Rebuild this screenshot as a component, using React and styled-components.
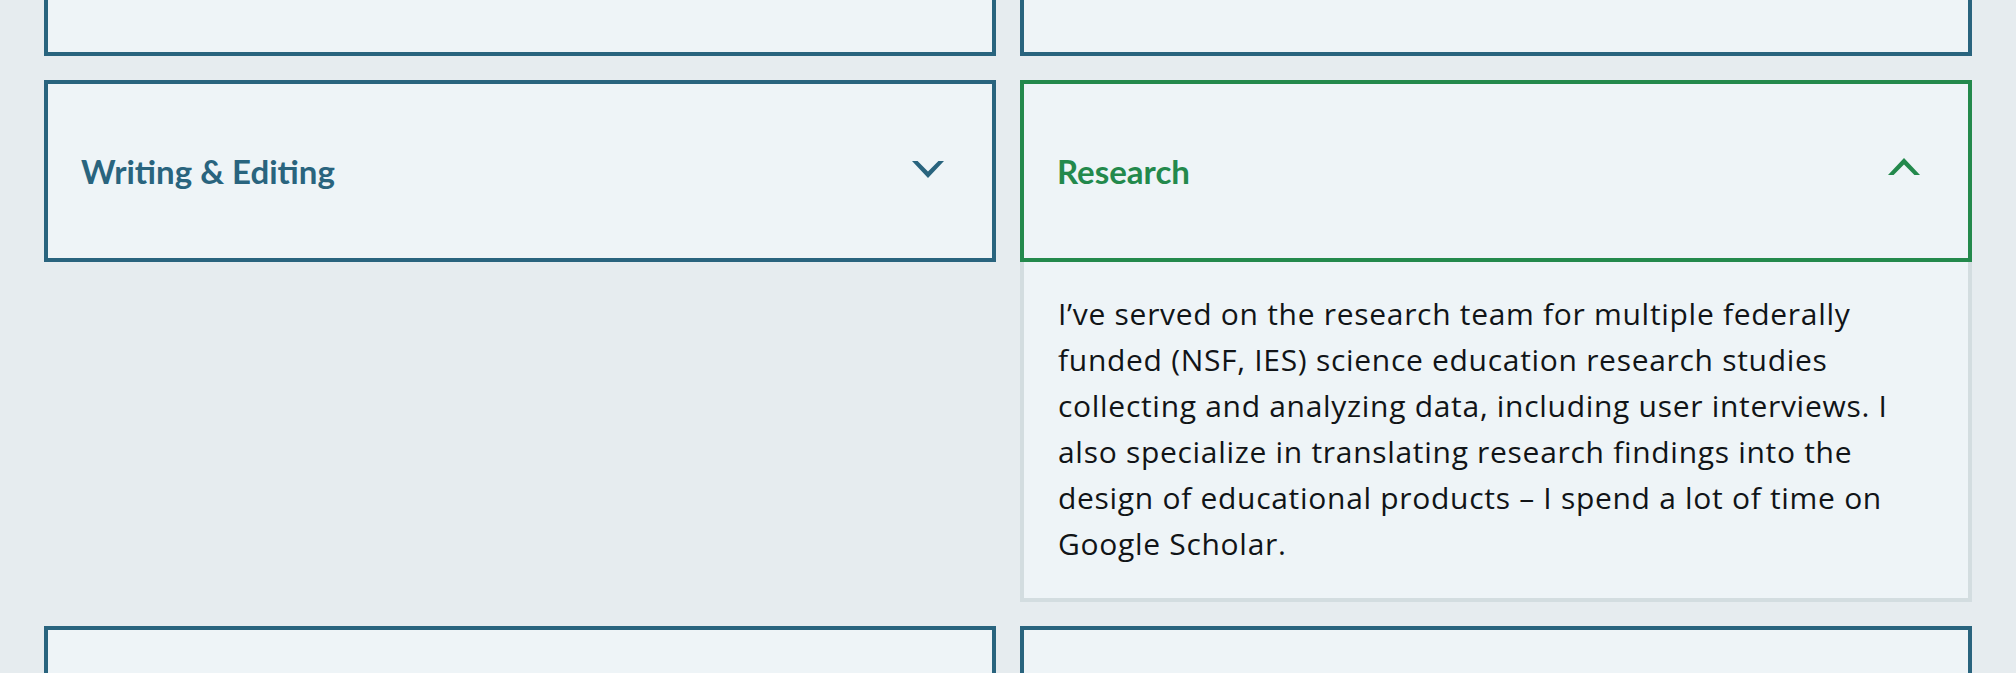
import React, { useState } from 'react';
import styled, { createGlobalStyle } from 'styled-components';

const GlobalStyle = createGlobalStyle`
  html, body {
    margin: 0;
    padding: 0;
    background: #e6ecef;
  }
  body {
    font-family: "Open Sans", Lato, sans-serif;
    overflow: hidden;
  }
`;

const Page = styled.div`
  padding: 0 44px;
  margin-top: -126px;
`;

const Grid = styled.div`
  display: grid;
  grid-template-columns: 1fr 1fr;
  column-gap: 24px;
  row-gap: 24px;
  align-items: start;
`;

const Item = styled.div`
  display: flex;
  flex-direction: column;
`;

const Header = styled.button`
  display: flex;
  align-items: center;
  justify-content: space-between;
  box-sizing: border-box;
  width: 100%;
  height: 182px;
  margin: 0;
  padding: 0 48px 0 33px;
  background: #eef4f7;
  border: 4px solid ${p => (p.$open ? '#23894c' : '#29647e')};
  color: ${p => (p.$open ? '#23894c' : '#29647e')};
  font-family: Lato, "Open Sans", sans-serif;
  font-size: 33px;
  font-weight: 700;
  text-align: left;
  cursor: pointer;
`;

const Chevron = styled.svg`
  width: 32px;
  height: 17px;
  flex: none;
  transform: ${p => (p.$open ? 'translateY(-5px) rotate(180deg)' : 'translateY(-2px)')};
`;

const Panel = styled.div`
  box-sizing: border-box;
  background: #eef4f7;
  border: 4px solid #d3dde0;
  border-top: none;
  padding: 29px 34px 31px;
  color: #111417;
  font-family: "Open Sans", Lato, sans-serif;
  font-size: 30px;
  letter-spacing: 0.7px;
  line-height: 46px;
`;

const items = [
  { id: 'a', title: '', body: '' },
  { id: 'b', title: '', body: '' },
  { id: 'writing', title: 'Writing & Editing', body: '' },
  {
    id: 'research',
    title: 'Research',
    body: 'I’ve served on the research team for multiple federally funded (NSF, IES) science education research studies collecting and analyzing data, including user interviews. I also specialize in translating research findings into the design of educational products – I spend a lot of time on Google Scholar.',
  },
  { id: 'c', title: '', body: '' },
  { id: 'd', title: '', body: '' },
];

function Accordion({ title, body, open, onToggle }) {
  return (
    <Item>
      <Header $open={open} onClick={onToggle}>
        <span>{title}</span>
        <Chevron $open={open} viewBox="0 0 32 17" aria-hidden="true">
          <path d="M0 0 H5.6 L16 10.6 L26.4 0 H32 L16 17 Z" fill="currentColor" />
        </Chevron>
      </Header>
      {open && <Panel>{body}</Panel>}
    </Item>
  );
}

export default function App() {
  const [openId, setOpenId] = useState('research');

  return (
    <Page>
      <GlobalStyle />
      <Grid>
        {items.map(it => (
          <Accordion
            key={it.id}
            title={it.title}
            body={it.body}
            open={openId === it.id}
            onToggle={() => setOpenId(openId === it.id ? null : it.id)}
          />
        ))}
      </Grid>
    </Page>
  );
}
